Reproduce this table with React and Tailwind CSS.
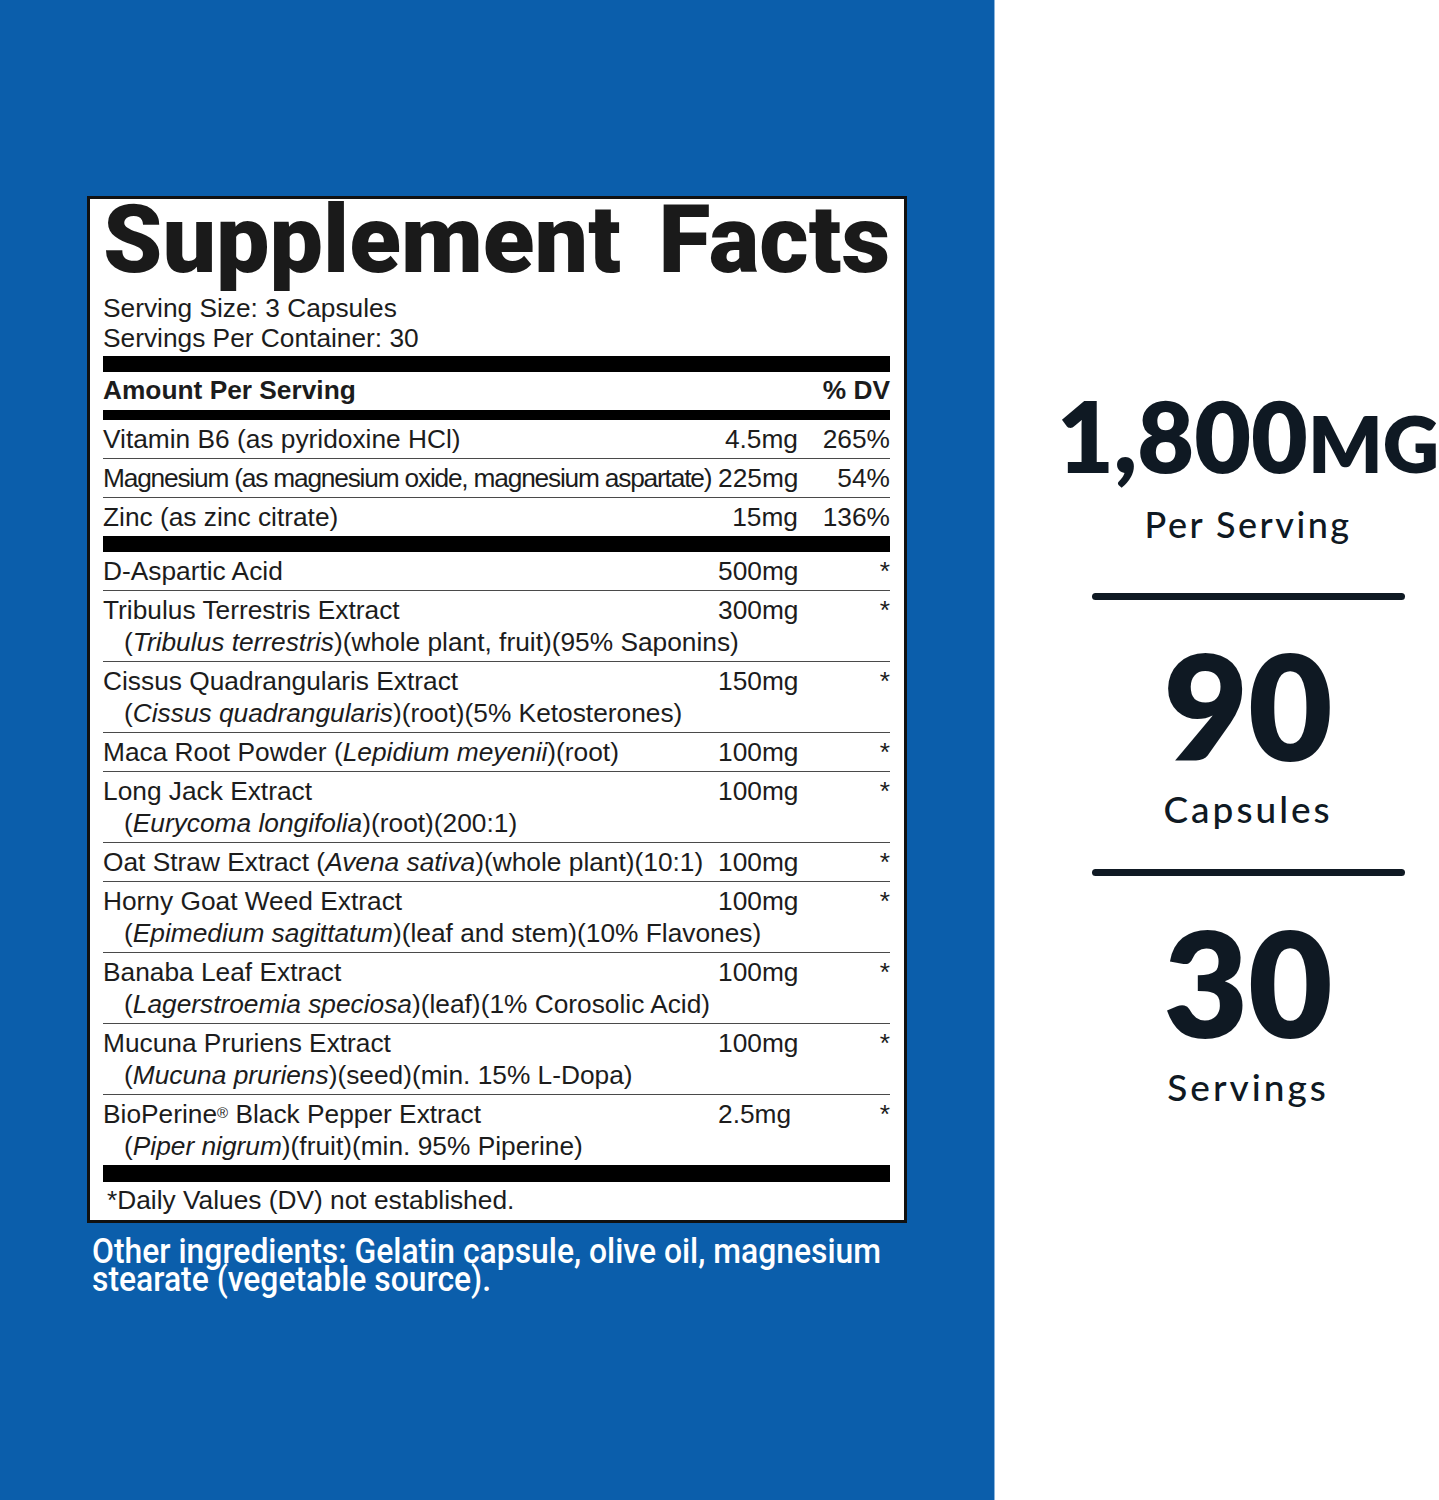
import React from "react";

const upper = [
  ["Vitamin B6 (as pyridoxine HCl)", "4.5mg", "265%"],
  ["Magnesium (as magnesium oxide, magnesium aspartate)", "225mg", "54%", true],
  ["Zinc (as zinc citrate)", "15mg", "136%"],
];

const lower = [
  { name: "D-Aspartic Acid", amt: "500mg" },
  { name: "Tribulus Terrestris Extract", latin: "Tribulus terrestris", rest: "(whole plant, fruit)(95% Saponins)", amt: "300mg" },
  { name: "Cissus Quadrangularis Extract", latin: "Cissus quadrangularis", rest: "(root)(5% Ketosterones)", amt: "150mg" },
  { name: "Maca Root Powder ", inlineLatin: "Lepidium meyenii", inlineRest: "(root)", amt: "100mg" },
  { name: "Long Jack Extract", latin: "Eurycoma longifolia", rest: "(root)(200:1)", amt: "100mg" },
  { name: "Oat Straw Extract ", inlineLatin: "Avena sativa", inlineRest: "(whole plant)(10:1)", amt: "100mg" },
  { name: "Horny Goat Weed Extract", latin: "Epimedium sagittatum", rest: "(leaf and stem)(10% Flavones)", amt: "100mg" },
  { name: "Banaba Leaf Extract", latin: "Lagerstroemia speciosa", rest: "(leaf)(1% Corosolic Acid)", amt: "100mg" },
  { name: "Mucuna Pruriens Extract", latin: "Mucuna pruriens", rest: "(seed)(min. 15% L-Dopa)", amt: "100mg" },
  { name: "BioPerine", reg: true, name2: " Black Pepper Extract", latin: "Piper nigrum", rest: "(fruit)(min. 95% Piperine)", amt: "2.5mg" },
];

function UpperRow({ r, last }) {
  return (
    <div className={"grid grid-cols-[615px_80px_92px] pt-[3px] pb-[3px] leading-[32px] " + (last ? "" : "border-b border-[#4a4a4a]")}>
      <div className={"whitespace-nowrap " + (r[3] ? "tracking-[-1.2px]" : "")}>{r[0]}</div>
      <div className="text-right whitespace-nowrap">{r[1]}</div>
      <div className="text-right">{r[2]}</div>
    </div>
  );
}

function LowerRow({ r, last }) {
  return (
    <div className={"pt-[3px] pb-[3px] leading-[32px] " + (last ? "" : "border-b border-[#4a4a4a]")}>
      <div className="grid grid-cols-[615px_80px_92px]">
        <div className="whitespace-nowrap">
          {r.name}
          {r.reg && <sup className="text-[15px] relative top-[-5px]">®</sup>}
          {r.name2}
          {r.inlineLatin && (
            <>
              (<i>{r.inlineLatin}</i>){r.inlineRest}
            </>
          )}
        </div>
        <div className="whitespace-nowrap">{r.amt}</div>
        <div className="text-right">*</div>
      </div>
      {r.latin && (
        <div className="pl-[21px] whitespace-nowrap">
          (<i>{r.latin}</i>){r.rest}
        </div>
      )}
    </div>
  );
}

export default function App() {
  return (
    <div className="flex w-[1439px] h-[1500px] bg-white overflow-hidden">
      <div className="w-[995px] h-full shrink-0 bg-[#0b5eab] border-r border-[#8ab4dc] pl-[87px] pt-[196px]">
        <div className="w-[820px] border-[3px] border-[#111] bg-white pl-[13px] pr-[14px] pt-px pb-[4px] text-[#1c1c1c] font-['Liberation_Sans',Arial,sans-serif] text-[26.3px]">
          <div className="font-['Roboto','Liberation_Sans',sans-serif] font-black text-[95px] leading-[80px] tracking-[0px] [word-spacing:14px] whitespace-nowrap text-[#1a1a1a]">
            Supplement Facts
          </div>
          <div className="mt-[13px] leading-[30px]">Serving Size: 3 Capsules</div>
          <div className="leading-[30px]">Servings Per Container: 30</div>
          <div className="mt-[3px] h-[16px] bg-black" />
          <div className="flex justify-between pt-[2px] leading-[32px] font-bold">
            <span>Amount Per Serving</span>
            <span>% DV</span>
          </div>
          <div className="mt-[4px] h-[10px] bg-black" />
          {upper.map((r, i) => (
            <UpperRow key={i} r={r} last={i === upper.length - 1} />
          ))}
          <div className="h-[16px] bg-black" />
          {lower.map((r, i) => (
            <LowerRow key={i} r={r} last={i === lower.length - 1} />
          ))}
          <div className="h-[17px] bg-black" />
          <div className="pl-[4px] pt-[2px] leading-[32px]">*Daily Values (DV) not established.</div>
        </div>
        <div className="mt-[15px] pl-[5px] text-white font-['Roboto','Liberation_Sans',sans-serif] font-medium text-[35px] leading-[28px]">
          <div className="origin-left scale-x-[0.91] whitespace-nowrap">Other ingredients: Gelatin capsule, olive oil, magnesium</div>
          <div className="origin-left scale-x-[0.91] whitespace-nowrap">stearate (vegetable source).</div>
        </div>
      </div>
      <div className="flex-1 flex flex-col items-center pl-[62px] pt-[386px] text-[#0f1923] font-['Lato','Noto_Sans',sans-serif]">
        <div className="font-extrabold text-[98px] leading-none whitespace-nowrap">
          1,800<span className="text-[78px]">MG</span>
        </div>
        <div className="mt-[22px] text-[36px] leading-none font-medium tracking-[2.5px]">Per Serving</div>
        <div className="mt-[51px] w-[313px] h-[7px] rounded-full bg-[#0f1923]" />
        <div className="mt-[32px] font-extrabold text-[146px] leading-none">90</div>
        <div className="mt-[12px] text-[37px] leading-none font-medium tracking-[3px]">Capsules</div>
        <div className="mt-[42px] w-[313px] h-[7px] rounded-full bg-[#0f1923]" />
        <div className="mt-[33px] font-extrabold text-[146px] leading-none">30</div>
        <div className="mt-[13px] text-[37px] leading-none font-medium tracking-[3px]">Servings</div>
      </div>
    </div>
  );
}
